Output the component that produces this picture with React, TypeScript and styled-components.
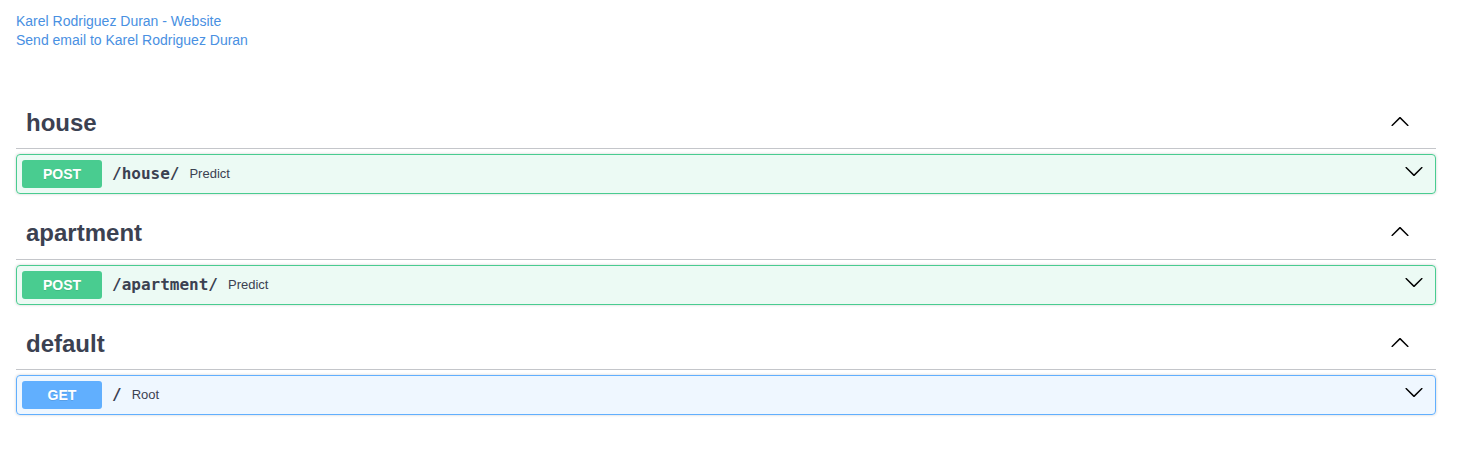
import React from "react"
import styled, { createGlobalStyle } from "styled-components"

const GlobalStyle = createGlobalStyle`
    body {
        margin: 0;
        background: #fff;
        font-family: "Liberation Sans", Arial, sans-serif;
    }
`

const Page = styled.div`
    padding: 12px 25px 30px 16px;
`

const Info = styled.div`
    font-size: 14px;
    line-height: 19px;
    margin-bottom: 49px;
`

const InfoLink = styled.a`
    display: block;
    color: #4990e2;
    text-decoration: none;
    cursor: pointer;
`

const Tag = styled.h3`
    box-sizing: border-box;
    display: flex;
    align-items: center;
    height: 50px;
    margin: 0 0 5px;
    padding: 0 26px 2px 10px;
    border-bottom: 1px solid rgba(59, 65, 81, 0.3);
    font-size: 24px;
    font-weight: 700;
    color: #3b4151;
    cursor: pointer;
`

const TagName = styled.span`
    flex: 1;
`

const Opblock = styled.div<{ $color: string }>`
    box-sizing: border-box;
    display: flex;
    align-items: center;
    height: 40px;
    margin: 0 0 15.5px;
    padding: 0 11px 0 5px;
    border: 1px solid ${(p) => p.$color};
    border-radius: 4px;
    background: ${(p) => p.$color}1a;
    box-shadow: 0 0 3px rgba(0, 0, 0, 0.19);
    cursor: pointer;
`

const Method = styled.span<{ $color: string }>`
    min-width: 80px;
    padding: 6px 0;
    border-radius: 3px;
    background: ${(p) => p.$color};
    color: #fff;
    font-size: 14px;
    font-weight: 700;
    line-height: 16px;
    text-align: center;
    text-shadow: 0 1px 0 rgba(0, 0, 0, 0.1);
`

const Path = styled.span`
    padding: 0 10px 1px;
    font-family: "DejaVu Sans Mono", monospace;
    font-size: 16px;
    font-weight: 600;
    color: #3b4151;
`

const Summary = styled.span`
    flex: 1;
    padding-bottom: 1px;
    font-size: 13px;
    color: #3b4151;
`

const ArrowIcon = styled.svg<{ $lift: number }>`
    flex: none;
    margin-bottom: ${(p) => p.$lift * 2}px;
`

const Arrow = ({ up, lift }: { up?: boolean; lift: number }) => (
    <ArrowIcon $lift={lift} width="20" height="20" viewBox="0 0 20 20" fill="#000">
        {up ? (
            <path d="M17.418 14.908c.272.268.709.268.979 0s.271-.701 0-.969l-7.908-7.83c-.27-.268-.707-.268-.979 0l-7.908 7.83c-.27.268-.27.701 0 .969.271.268.709.268.979 0L10 7.767l7.418 7.141z" />
        ) : (
            <path d="M17.418 6.109c.272-.268.709-.268.979 0s.271.701 0 .969l-7.908 7.83c-.27.268-.707.268-.979 0l-7.908-7.83c-.27-.268-.27-.701 0-.969.271-.268.709-.268.979 0L10 13.25l7.418-7.141z" />
        )}
    </ArrowIcon>
)

const colors = { POST: "#49cc90", GET: "#61affe" }

const sections = [
    { tag: "house", method: "POST", path: "/house/", summary: "Predict" },
    { tag: "apartment", method: "POST", path: "/apartment/", summary: "Predict" },
    { tag: "default", method: "GET", path: "/", summary: "Root" }
] as const

export default function App() {
    return (
        <Page>
            <GlobalStyle />
            <Info>
                <InfoLink>Karel Rodriguez Duran - Website</InfoLink>
                <InfoLink>Send email to Karel Rodriguez Duran</InfoLink>
            </Info>
            {sections.map((s) => (
                <div key={s.tag}>
                    <Tag>
                        <TagName>{s.tag}</TagName>
                        <Arrow up lift={2} />
                    </Tag>
                    <Opblock $color={colors[s.method]}>
                        <Method $color={colors[s.method]}>{s.method}</Method>
                        <Path>{s.path}</Path>
                        <Summary>{s.summary}</Summary>
                        <Arrow lift={3} />
                    </Opblock>
                </div>
            ))}
        </Page>
    )
}
